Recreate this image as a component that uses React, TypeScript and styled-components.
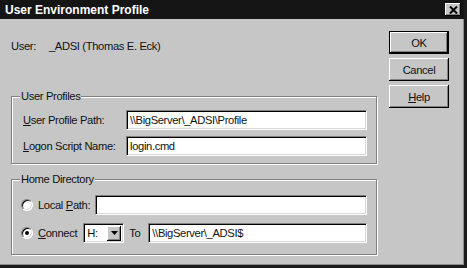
import React from 'react';
import styled, { createGlobalStyle } from 'styled-components';

const GlobalStyle = createGlobalStyle`
  html, body {
    margin: 0;
    padding: 0;
    background: #c6c6c6;
  }
  body {
    font-family: 'Liberation Sans', Arial, sans-serif;
  }
`;

const Window = styled.div`
  width: 467px;
  height: 268px;
  box-sizing: border-box;
  display: flex;
  flex-direction: column;
  background: #c6c6c6;
  border-right: 3px solid #1c1c1c;
  border-bottom: 3px solid #1c1c1c;
  box-shadow: inset -1px -1px 0 #8c8c8c;
  color: #111;
  font-family: 'Liberation Sans', Arial, sans-serif;
  font-size: 11.2px;
  letter-spacing: -0.35px;
`;

const TitleBar = styled.div`
  height: 19px;
  flex: none;
  box-sizing: border-box;
  display: flex;
  align-items: center;
  justify-content: space-between;
  padding: 0 3px 0 5px;
  background: #151515;
  color: #fff;
  font-size: 12px;
  font-weight: bold;
  letter-spacing: 0;
`;

const CloseButton = styled.div`
  width: 16px;
  height: 13px;
  display: flex;
  align-items: center;
  justify-content: center;
  background: #c6c6c6;
  box-shadow: inset -1px -1px 0 #000, inset 1px 1px 0 #fff, inset -2px -2px 0 #808080;
`;

const Body = styled.div`
  flex: 1;
  display: flex;
  padding-left: 11px;
`;

const Content = styled.div`
  width: 366px;
  display: flex;
  flex-direction: column;
`;

const UserLine = styled.div`
  margin-top: 20px;
  display: flex;
  line-height: 14px;
`;

const UserLabel = styled.span`
  width: 38px;
`;

const Group = styled.div<{ $top: number; $pt: number; $pb: number; $pl: number; $gap: number }>`
  position: relative;
  margin-top: ${({ $top }) => $top}px;
  border: 1px solid #808080;
  box-shadow: 1px 1px 0 #fff, inset 1px 1px 0 #fff;
  padding: ${({ $pt, $pb, $pl }) => `${$pt}px 9px ${$pb}px ${$pl}px`};
  display: flex;
  flex-direction: column;
  gap: ${({ $gap }) => $gap}px;
`;

const Caption = styled.span`
  position: absolute;
  top: -8px;
  left: 8px;
  padding: 0 1px;
  background: #c6c6c6;
  line-height: 14px;
`;

const Row = styled.div`
  height: 20px;
  display: flex;
  align-items: center;
`;

const FieldLabel = styled.span<{ $w?: number; $ml?: number; $mr?: number }>`
  ${({ $w }) => ($w ? `width: ${$w}px;` : '')}
  margin-left: ${({ $ml }) => $ml ?? 0}px;
  margin-right: ${({ $mr }) => $mr ?? 0}px;
  flex: none;
  white-space: nowrap;
`;

const Field = styled.div<{ $w?: number }>`
  ${({ $w }) => ($w ? `width: ${$w}px; flex: none;` : 'flex: 1;')}
  height: 20px;
  box-sizing: border-box;
  display: flex;
  align-items: center;
  padding-left: 3px;
  background: #fff;
  border: 1px solid;
  border-color: #808080 #fff #fff #808080;
  box-shadow: inset 1px 1px 0 #000, inset -1px -1px 0 #d6d6d6;
  white-space: nowrap;
  overflow: hidden;
`;

const Combo = styled(Field)`
  justify-content: space-between;
  padding-right: 2px;
`;

const ArrowButton = styled.div`
  width: 14px;
  height: 15px;
  display: flex;
  align-items: center;
  justify-content: center;
  background: #c6c6c6;
  box-shadow: inset -1px -1px 0 #000, inset 1px 1px 0 #fff, inset -2px -2px 0 #808080;
`;

const Radio = styled.span<{ $checked?: boolean }>`
  width: 12px;
  height: 12px;
  box-sizing: border-box;
  flex: none;
  margin-right: 5px;
  border-radius: 50%;
  border: 1px solid;
  border-color: #808080 #fff #fff #808080;
  background: #fff;
  box-shadow: inset 1px 1px 0 #000, inset -1px -1px 0 #d6d6d6;
  display: flex;
  align-items: center;
  justify-content: center;
  &::after {
    content: '';
    width: 4px;
    height: 4px;
    border-radius: 50%;
    background: ${({ $checked }) => ($checked ? '#000' : 'transparent')};
  }
`;

const ButtonColumn = styled.div`
  margin-left: 12px;
  padding-top: 12px;
  display: flex;
  flex-direction: column;
  gap: 4px;
`;

const Button = styled.div<{ $default?: boolean }>`
  width: 60px;
  height: 23px;
  box-sizing: border-box;
  display: flex;
  align-items: center;
  justify-content: center;
  background: #c6c6c6;
  border: ${({ $default }) => ($default ? '1px solid #000' : 'none')};
  box-shadow: inset -1px -1px 0 #000, inset 1px 1px 0 #fff, inset -2px -2px 0 #808080;
`;

function CloseGlyph() {
  return (
    <svg width='9' height='8' viewBox='0 0 9 8'>
      <path d='M1 0.5 L8 7.5 M8 0.5 L1 7.5' stroke='#000' strokeWidth='2' />
    </svg>
  );
}

function DownArrow() {
  return (
    <svg width='7' height='4' viewBox='0 0 7 4'>
      <path d='M0 0 H7 L3.5 4 Z' fill='#000' />
    </svg>
  );
}

export default function App() {
  return (
    <>
      <GlobalStyle />
      <Window>
        <TitleBar>
          <span>User Environment Profile</span>
          <CloseButton>
            <CloseGlyph />
          </CloseButton>
        </TitleBar>
        <Body>
          <Content>
            <UserLine>
              <UserLabel>User:</UserLabel>
              <span>_ADSI (Thomas E. Eck)</span>
            </UserLine>

            <Group $top={43} $pt={13} $pb={7} $pl={11} $gap={6}>
              <Caption>User Profiles</Caption>
              <Row>
                <FieldLabel $w={103}>
                  <u>U</u>ser Profile Path:
                </FieldLabel>
                <Field>\\BigServer\_ADSI\Profile</Field>
              </Row>
              <Row>
                <FieldLabel $w={103}>
                  <u>L</u>ogon Script Name:
                </FieldLabel>
                <Field>login.cmd</Field>
              </Row>
            </Group>

            <Group $top={15} $pt={15} $pb={11} $pl={9} $gap={8}>
              <Caption>Home Directory</Caption>
              <Row>
                <Radio />
                <FieldLabel $mr={5}>
                  Local <u>P</u>ath:
                </FieldLabel>
                <Field />
              </Row>
              <Row>
                <Radio $checked />
                <FieldLabel $mr={6}>
                  <u>C</u>onnect
                </FieldLabel>
                <Combo $w={41}>
                  <span>H:</span>
                  <ArrowButton>
                    <DownArrow />
                  </ArrowButton>
                </Combo>
                <FieldLabel $ml={5} $mr={8}>
                  To
                </FieldLabel>
                <Field>\\BigServer\_ADSI$</Field>
              </Row>
            </Group>
          </Content>

          <ButtonColumn>
            <Button $default>OK</Button>
            <Button>Cancel</Button>
            <Button>
              <u>H</u>elp
            </Button>
          </ButtonColumn>
        </Body>
      </Window>
    </>
  );
}
